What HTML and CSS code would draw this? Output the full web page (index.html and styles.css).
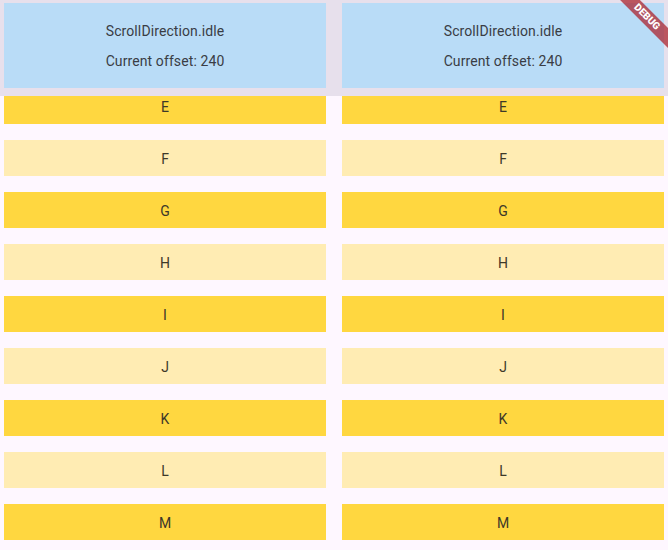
FILE: index.html
```html
<!DOCTYPE html>
<html>
<head>
<meta charset="utf-8">
<link rel="stylesheet" href="styles.css">
</head>
<body>
<div class="page">
  <div class="header">
    <div class="status">
      <div class="line">ScrollDirection.idle</div>
      <div class="line">Current offset: 240</div>
    </div>
    <div class="status">
      <div class="line">ScrollDirection.idle</div>
      <div class="line">Current offset: 240</div>
    </div>
  </div>
  <div class="lists">
    <div class="list">
      <div class="item dark">E</div>
      <div class="item light">F</div>
      <div class="item dark">G</div>
      <div class="item light">H</div>
      <div class="item dark">I</div>
      <div class="item light">J</div>
      <div class="item dark">K</div>
      <div class="item light">L</div>
      <div class="item dark">M</div>
    </div>
    <div class="list">
      <div class="item dark">E</div>
      <div class="item light">F</div>
      <div class="item dark">G</div>
      <div class="item light">H</div>
      <div class="item dark">I</div>
      <div class="item light">J</div>
      <div class="item dark">K</div>
      <div class="item light">L</div>
      <div class="item dark">M</div>
    </div>
  </div>
</div>
<div class="banner-wrap"><div class="banner">DEBUG</div></div>
</body>
</html>
```
FILE: styles.css
```css
html, body {
  margin: 0;
  padding: 0;
  width: 668px;
  height: 550px;
  overflow: hidden;
  background: #fef7ff;
  font-family: Roboto, "Liberation Sans", sans-serif;
  color: #1d1b20;
}
.page {
  display: flex;
  flex-direction: column;
}
.header {
  position: relative;
  z-index: 1;
  height: 96px;
  box-sizing: border-box;
  padding: 3px 4px 8px;
  background: #e7e0ec;
  display: grid;
  grid-template-columns: 1fr 1fr;
  column-gap: 16px;
}
.status {
  background: #b9dcf7;
  box-sizing: border-box;
  padding-top: 1px;
  display: flex;
  flex-direction: column;
  align-items: center;
  justify-content: center;
  gap: 10px;
  font-size: 14px;
  line-height: 20px;
  color: #3a3d45;
  letter-spacing: 0.1px;
}
.lists {
  margin-top: -8px;
  padding: 0 4px;
  display: grid;
  grid-template-columns: 1fr 1fr;
  column-gap: 16px;
}
.list {
  display: flex;
  flex-direction: column;
  gap: 16px;
}
.item {
  height: 36px;
  box-sizing: border-box;
  padding-top: 1px;
  display: flex;
  align-items: center;
  justify-content: center;
  font-size: 14px;
  color: #3d3829;
}
.dark { background: #ffd740; }
.light { background: #ffecb3; }
.banner-wrap {
  position: absolute;
  top: 0;
  right: 0;
  width: 80px;
  height: 80px;
  overflow: hidden;
  z-index: 2;
}
.banner {
  position: absolute;
  left: 19px;
  top: 10px;
  width: 80px;
  height: 14px;
  transform: rotate(45deg);
  background: rgba(170, 30, 40, 0.72);
  color: #fff;
  font-size: 10px;
  font-weight: 900;
  line-height: 14px;
  text-align: center;
  font-family: Roboto, "Liberation Sans", sans-serif;
}
```
